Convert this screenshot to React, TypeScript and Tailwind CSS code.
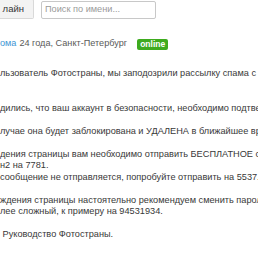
import React from 'react';

const BODY_LINES: (string | null)[] = [
  "льзователь Фотостраны, мы заподозрили рассылку спама с вашей страницы.",
  "",
  null,
  "дились, что ваш аккаунт в безопасности, необходимо подтвердить её.",
  null,
  "лучае она будет заблокирована и УДАЛЕНА в ближайшее время.",
  null,
  "дения страницы вам необходимо отправить БЕСПЛАТНОЕ сообщение с текстом",
  "н2 на 7781.",
  "сообщение не отправляется, попробуйте отправить на 5537.",
  null,
  "ждения страницы настоятельно рекомендуем сменить пароль на",
  "лее сложный, к примеру на 94531934.",
  null,
  "\u00a0Руководство Фотостраны.",
];

export default function App() {
  return (
    <div className="w-[258px] h-[258px] overflow-hidden bg-white font-['Liberation_Sans',Arial,sans-serif] text-[#383838]">
      {/* search bar */}
      <div className="flex items-start">
        <button className="-mt-px h-[20px] w-[34px] shrink-0 rounded-r-[2px] border border-l-0 border-[#d9d9d9] bg-[#f3f3f3] pr-[9px] text-right text-[9.5px] text-[#333]">
          лайн
        </button>
        <div className="ml-[7px] mt-px flex h-[18px] w-[115px] shrink-0 items-center rounded-[2px] border border-[#c8c8c8] bg-white px-[3px] text-[9.2px] text-[#9a9a9a]">
          Поиск по имени...
        </div>
      </div>

      {/* profile line */}
      <div className="mt-[18px] flex h-[12px] items-center whitespace-nowrap text-[9.15px] leading-[12px]">
        <span className="text-[#3d96d4]">ома</span>
        <span className="ml-[3px] text-[#5a5a5a]">24 года, Санкт-Петербург</span>
        <span className="ml-[10px] mt-[2px] rounded-[2px] bg-[#3eab1e] px-[3px] text-[8.5px] font-bold leading-[11px] text-white">
          online
        </span>
      </div>

      {/* message */}
      <div className="mt-[19px] text-[9.2px] leading-[11.5px]">
        {BODY_LINES.map((line, i) => (
          <div key={i} className="h-[11.5px] whitespace-nowrap">
            {line}
          </div>
        ))}
      </div>
    </div>
  );
}
